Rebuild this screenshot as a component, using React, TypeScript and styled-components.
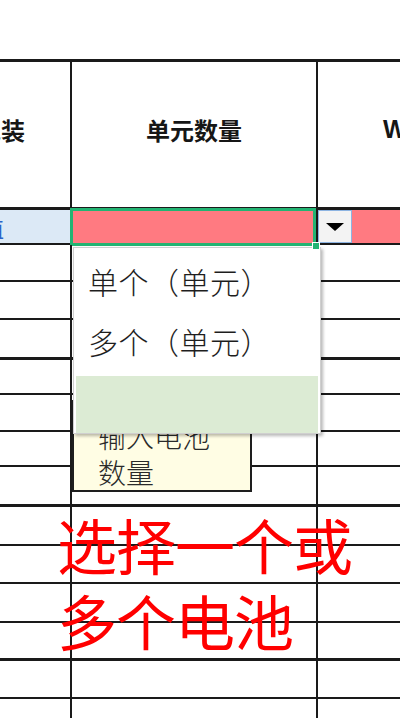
import React from "react";
import styled, { createGlobalStyle } from "styled-components";

const GlobalStyle = createGlobalStyle`
  html, body {
    margin: 0;
    padding: 0;
    background: #ffffff;
    overflow: hidden;
  }
  body {
    font-family: "Noto Sans CJK SC", "Noto Sans", sans-serif;
  }
`;

// body row heights, the first one is the selected row
const ROW_HEIGHTS = [36, 37, 38, 39, 36, 37, 35, 39, 40, 38, 39, 37, 39, 38];
const THICK_ROWS = [0, 4, 8, 12];

const Page = styled.div`
  position: relative;
  width: 400px;
  height: 718px;
  overflow: hidden;
  padding-top: 59px;
  box-sizing: border-box;
`;

const Sheet = styled.div`
  display: flex;
  flex-direction: column;
`;

const Row = styled.div<{ h: number; thick?: boolean }>`
  display: grid;
  grid-template-columns: 70px 246px 1fr;
  height: ${(p) => p.h}px;
  box-sizing: border-box;
  border-top: ${(p) => (p.thick ? 3 : 2)}px solid #1a1a1a;
`;

const Cell = styled.div<{ bg?: string; first?: boolean; justify?: string }>`
  position: relative;
  background: ${(p) => p.bg ?? "transparent"};
  border-left: ${(p) => (p.first ? "none" : "2px solid #1a1a1a")};
  overflow: hidden;
  display: flex;
  align-items: center;
  justify-content: ${(p) => p.justify ?? "flex-start"};
`;

const HeadText = styled.span<{ ml?: number; mr?: number }>`
  flex: none;
  white-space: nowrap;
  font-size: 24px;
  font-weight: 700;
  color: #161616;
  margin-left: ${(p) => p.ml ?? 0}px;
  margin-right: ${(p) => p.mr ?? 0}px;
  margin-top: -10px;
`;

const LatinHead = styled(HeadText)`
  font-family: "Liberation Sans", Arial, sans-serif;
  font-size: 25px;
`;

const CutText = styled.span`
  color: #2a63c8;
  font-size: 22px;
  margin-left: -18px;
`;

const SelectedCell = styled(Cell)`
  background: #ff7a81;
  box-shadow: inset 0 0 0 3px #22b473;
  margin-top: -2px;
  margin-bottom: -3px;
  border-left: none;
  overflow: visible;
`;

const Handle = styled.div`
  position: absolute;
  right: -4px;
  bottom: -4px;
  width: 6px;
  height: 6px;
  background: #22b473;
  border: 1px solid #ffffff;
  z-index: 4;
`;

const DropButton = styled.div`
  width: 34px;
  height: 100%;
  box-sizing: border-box;
  background: #f3f3f3;
  border: 1px solid #8db4e2;
  display: flex;
  align-items: center;
  justify-content: center;
`;

const Triangle = styled.div`
  width: 0;
  height: 0;
  border-left: 9px solid transparent;
  border-right: 9px solid transparent;
  border-top: 8px solid #000;
`;

const DropList = styled.div`
  position: absolute;
  left: 73px;
  top: 247px;
  width: 248px;
  height: 187px;
  box-sizing: border-box;
  background: #ffffff;
  border: 1px solid #cfcfcf;
  box-shadow: 2px 2px 3px rgba(0, 0, 0, 0.28);
  padding-top: 3px;
  display: flex;
  flex-direction: column;
  z-index: 3;
`;

const DropItem = styled.div`
  height: 60px;
  display: flex;
  align-items: center;
  padding-left: 14px;
  font-size: 30px;
  font-weight: 300;
  color: #1e1e1e;
  letter-spacing: 0.5px;
`;

const DropBlank = styled.div`
  margin: 5px 2px 0 2px;
  flex: 1;
  background: #dcebd4;
`;

const Comment = styled.div`
  position: absolute;
  left: 72px;
  top: 400px;
  width: 180px;
  height: 92px;
  box-sizing: border-box;
  background: #fffde4;
  border: 2px solid #1e1e1e;
  padding: 16px 0 0 24px;
  font-size: 28px;
  font-weight: 300;
  line-height: 36px;
  color: #2a2a2a;
  z-index: 2;
`;

const Caption = styled.div`
  position: absolute;
  left: 57px;
  top: 506px;
  font-size: 60px;
  line-height: 76px;
  color: #ff0000;
  letter-spacing: -1px;
  z-index: 2;
`;

export default function App() {
  return (
    <>
      <GlobalStyle />
      <Page>
        <Sheet>
          <Row h={148} thick>
            <Cell first justify="flex-end">
              <HeadText mr={45}>包装</HeadText>
            </Cell>
            <Cell justify="center">
              <HeadText>单元数量</HeadText>
            </Cell>
            <Cell>
              <LatinHead ml={65}>Wh</LatinHead>
            </Cell>
          </Row>
          {ROW_HEIGHTS.map((h, i) => (
            <Row key={i} h={h} thick={THICK_ROWS.includes(i)}>
              {i === 0 ? (
                <>
                  <Cell first bg="#dce9f6">
                    <CutText>值</CutText>
                  </Cell>
                  <SelectedCell>
                    <Handle />
                  </SelectedCell>
                  <Cell bg="#ff7a81">
                    <DropButton>
                      <Triangle />
                    </DropButton>
                  </Cell>
                </>
              ) : (
                <>
                  <Cell first />
                  <Cell />
                  <Cell />
                </>
              )}
            </Row>
          ))}
        </Sheet>
        <Comment>
          输入电池
          <br />
          数量
        </Comment>
        <DropList>
          <DropItem>单个（单元）</DropItem>
          <DropItem>多个（单元）</DropItem>
          <DropBlank />
        </DropList>
        <Caption>
          选择一个或
          <br />
          多个电池
        </Caption>
      </Page>
    </>
  );
}
